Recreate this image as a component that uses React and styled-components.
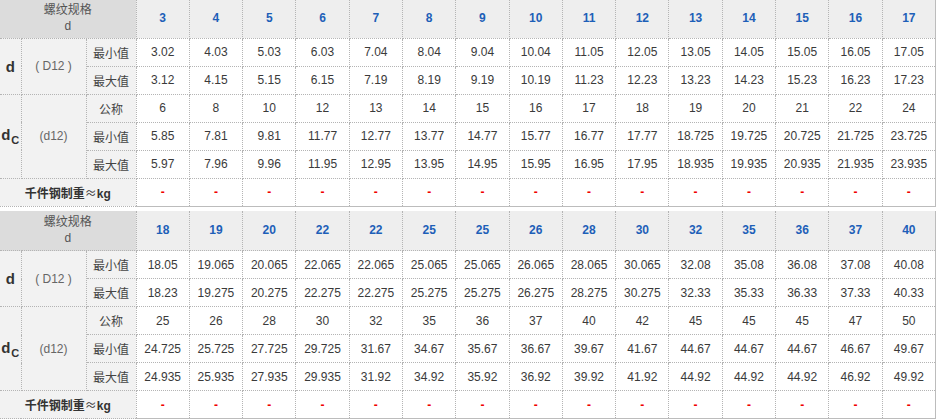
import styled, { createGlobalStyle } from 'styled-components';

const tables = [
  {
    sizes: ['3', '4', '5', '6', '7', '8', '9', '10', '11', '12', '13', '14', '15', '16', '17'],
    dMin: ['3.02', '4.03', '5.03', '6.03', '7.04', '8.04', '9.04', '10.04', '11.05', '12.05', '13.05', '14.05', '15.05', '16.05', '17.05'],
    dMax: ['3.12', '4.15', '5.15', '6.15', '7.19', '8.19', '9.19', '10.19', '11.23', '12.23', '13.23', '14.23', '15.23', '16.23', '17.23'],
    cNom: ['6', '8', '10', '12', '13', '14', '15', '16', '17', '18', '19', '20', '21', '22', '24'],
    cMin: ['5.85', '7.81', '9.81', '11.77', '12.77', '13.77', '14.77', '15.77', '16.77', '17.77', '18.725', '19.725', '20.725', '21.725', '23.725'],
    cMax: ['5.97', '7.96', '9.96', '11.95', '12.95', '13.95', '14.95', '15.95', '16.95', '17.95', '18.935', '19.935', '20.935', '21.935', '23.935'],
  },
  {
    sizes: ['18', '19', '20', '22', '22', '25', '25', '26', '28', '30', '32', '35', '36', '37', '40'],
    dMin: ['18.05', '19.065', '20.065', '22.065', '22.065', '25.065', '25.065', '26.065', '28.065', '30.065', '32.08', '35.08', '36.08', '37.08', '40.08'],
    dMax: ['18.23', '19.275', '20.275', '22.275', '22.275', '25.275', '25.275', '26.275', '28.275', '30.275', '32.33', '35.33', '36.33', '37.33', '40.33'],
    cNom: ['25', '26', '28', '30', '32', '35', '36', '37', '40', '42', '45', '45', '45', '47', '50'],
    cMin: ['24.725', '25.725', '27.725', '29.725', '31.67', '34.67', '35.67', '36.67', '39.67', '41.67', '44.67', '44.67', '44.67', '46.67', '49.67'],
    cMax: ['24.935', '25.935', '27.935', '29.935', '31.92', '34.92', '35.92', '36.92', '39.92', '41.92', '44.92', '44.92', '44.92', '46.92', '49.92'],
  },
];

const GlobalStyle = createGlobalStyle`
  body {
    margin: 0;
    background: #ffffff;
    font-family: "Liberation Sans", "Noto Sans CJK SC", sans-serif;
  }
`;

const Page = styled.div`
  display: flex;
  flex-direction: column;
  gap: 4px;
  margin-top: -2px;
`;

const Table = styled.table`
  width: 936px;
  table-layout: fixed;
  border-collapse: collapse;
  font-size: 12px;
  color: #3a3a3a;
`;

const Row = styled.tr`
  height: ${(p) => (p.$head ? '40px' : '28px')};
`;

const Cell = styled.td`
  padding: 0;
  text-align: center;
  vertical-align: middle;
  border: 1px dotted #b4b4b4;
  white-space: nowrap;
  &:last-child {
    border-right: 1px solid #bcbcbc;
  }
`;

const HeadTitle = styled(Cell)`
  background: #dcdcdc;
  color: #555;
  line-height: 16px;
  border-top: none;
  border-left: none;
`;

const HeadSize = styled(Cell)`
  background: #eeeeee;
  color: #1d5fb8;
  font-weight: bold;
  border-top: none;
`;

const Label = styled(Cell)`
  background: #f2f2f2;
  color: ${(p) => (p.$muted ? '#666' : '#444')};
  &:first-child {
    border-left: none;
  }
`;

const Symbol = styled(Label)`
  font-size: 15px;
  font-weight: bold;
  color: #333;
`;

const Sub = styled.sub`
  font-size: 11px;
  vertical-align: -4px;
  margin-left: 1px;
`;

const Value = styled(Cell)`
  background: #fff;
`;

const WeightLabel = styled(Label)`
  font-weight: bold;
  color: #333;
  border-left: none;
`;

const Approx = styled.span`
  font-family: "Noto Sans CJK SC", sans-serif;
  font-weight: normal;
`;

const Dash = styled(Cell)`
  background: #fff;
  color: #f00000;
  font-weight: bold;
  border-bottom: 1px solid #bcbcbc;
`;

const Values = ({ list }) => list.map((v, i) => <Value key={i}>{v}</Value>);

const SpecTable = ({ data }) => (
  <Table>
    <colgroup>
      <col style={{ width: 21 }} />
      <col style={{ width: 65 }} />
      <col style={{ width: 50 }} />
      {data.sizes.map((_, i) => (
        <col key={i} />
      ))}
    </colgroup>
    <tbody>
      <Row $head>
        <HeadTitle colSpan={3}>
          螺纹规格
          <br />d
        </HeadTitle>
        {data.sizes.map((s, i) => (
          <HeadSize key={i}>{s}</HeadSize>
        ))}
      </Row>
      <Row>
        <Symbol rowSpan={2}>d</Symbol>
        <Label rowSpan={2} $muted>( D12 )</Label>
        <Label>最小值</Label>
        <Values list={data.dMin} />
      </Row>
      <Row>
        <Label>最大值</Label>
        <Values list={data.dMax} />
      </Row>
      <Row>
        <Symbol rowSpan={3}>
          d<Sub>C</Sub>
        </Symbol>
        <Label rowSpan={3} $muted>(d12)</Label>
        <Label>公称</Label>
        <Values list={data.cNom} />
      </Row>
      <Row>
        <Label>最小值</Label>
        <Values list={data.cMin} />
      </Row>
      <Row>
        <Label>最大值</Label>
        <Values list={data.cMax} />
      </Row>
      <Row>
        <WeightLabel colSpan={3}>
          千件钢制重<Approx>≈</Approx>kg
        </WeightLabel>
        {data.sizes.map((_, i) => (
          <Dash key={i}>-</Dash>
        ))}
      </Row>
    </tbody>
  </Table>
);

const App = () => (
  <>
    <GlobalStyle />
    <Page>
      {tables.map((t, i) => (
        <SpecTable key={i} data={t} />
      ))}
    </Page>
  </>
);

export default App;
